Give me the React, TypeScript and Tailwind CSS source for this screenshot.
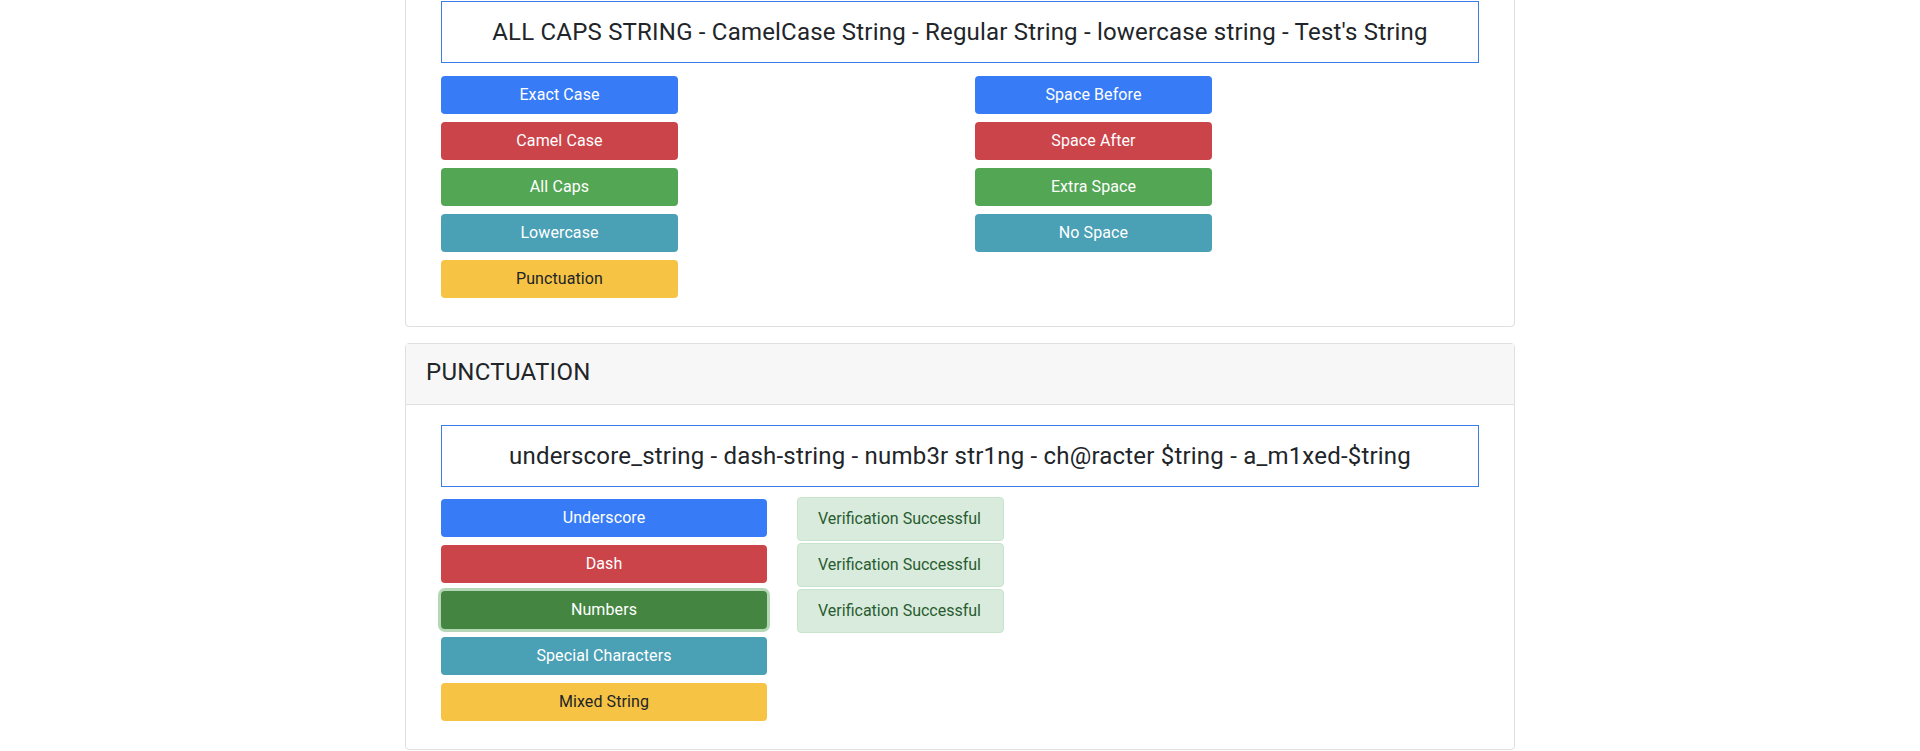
import React from "react";

// Botones de prueba por tarjeta. Test buttons per card.
type Variant = "primary" | "danger" | "success" | "info" | "warning" | "successActive";

const variantClass: Record<Variant, string> = {
  primary: "bg-[#377cf6] text-white",
  danger: "bg-[#cb444a] text-white",
  success: "bg-[#53a653] text-white",
  info: "bg-[#4aa0b5] text-white",
  warning: "bg-[#f6c344] text-[#212529]",
  successActive: "bg-[#438541] text-white ring-[3px] ring-[#b4d8b6]",
};

const TestButton: React.FC<{ label: string; variant: Variant }> = ({ label, variant }) => (
  <button
    className={`h-[38px] w-full rounded-[4px] text-[16px] leading-6 tracking-[0.1px] ${variantClass[variant]}`}
  >
    {label}
  </button>
);

const StringBox: React.FC<{ text: string }> = ({ text }) => (
  <div className="flex h-[62px] items-center justify-center border border-[#3a7be6] text-[24px] leading-9 tracking-[0.2px]">
    {text}
  </div>
);

const SuccessAlert: React.FC = () => (
  <div className="flex h-[44px] items-center whitespace-nowrap rounded-[4px] border border-[#c8e4cc] bg-[#d9ebdc] px-[20px] text-[16px] text-[#285c31]">
    Verification Successful
  </div>
);

const caseButtons: { label: string; variant: Variant }[] = [
  { label: "Exact Case", variant: "primary" },
  { label: "Camel Case", variant: "danger" },
  { label: "All Caps", variant: "success" },
  { label: "Lowercase", variant: "info" },
  { label: "Punctuation", variant: "warning" },
];

const spaceButtons: { label: string; variant: Variant }[] = [
  { label: "Space Before", variant: "primary" },
  { label: "Space After", variant: "danger" },
  { label: "Extra Space", variant: "success" },
  { label: "No Space", variant: "info" },
];

const punctButtons: { label: string; variant: Variant }[] = [
  { label: "Underscore", variant: "primary" },
  { label: "Dash", variant: "danger" },
  { label: "Numbers", variant: "successActive" },
  { label: "Special Characters", variant: "info" },
  { label: "Mixed String", variant: "warning" },
];

export default function App() {
  return (
    <div className="min-h-screen overflow-hidden bg-white font-['Roboto','Liberation_Sans',sans-serif] text-[#212529]">
      <div className="mx-auto -mt-[20px] w-[1110px]">
        {/* Tarjeta de mayúsculas y espacios */}
        <section className="rounded-[4px] border border-[#dfdfdf] p-[20px]">
          <div className="px-[15px] pb-[8px]">
            <StringBox text="ALL CAPS STRING - CamelCase String - Regular String - lowercase string - Test's String" />
            <div className="mt-[13px] grid grid-cols-2 gap-[30px]">
              <div className="flex w-[237px] flex-col gap-2">
                {caseButtons.map((b) => (
                  <TestButton key={b.label} {...b} />
                ))}
              </div>
              <div className="flex w-[237px] flex-col gap-2">
                {spaceButtons.map((b) => (
                  <TestButton key={b.label} {...b} />
                ))}
              </div>
            </div>
          </div>
        </section>

        {/* Tarjeta de puntuación */}
        <section className="mt-[16px] rounded-[4px] border border-[#dfdfdf]">
          <header className="border-b border-[#dfdfdf] bg-[#f7f7f7] px-[20px] pt-[10px] pb-[14px] text-[24px] leading-9 tracking-[0.3px]">
            PUNCTUATION
          </header>
          <div className="p-[20px]">
            <div className="px-[15px] pb-[8px]">
              <StringBox text="underscore_string - dash-string - numb3r str1ng - ch@racter $tring - a_m1xed-$tring" />
              <div className="flex gap-[30px]">
                <div className="mt-[12px] flex w-[326px] flex-col gap-2">
                  {punctButtons.map((b) => (
                    <TestButton key={b.label} {...b} />
                  ))}
                </div>
                <div className="mt-[10px] flex w-[207px] flex-col gap-[2px]">
                  <SuccessAlert />
                  <SuccessAlert />
                  <SuccessAlert />
                </div>
              </div>
            </div>
          </div>
        </section>
      </div>
    </div>
  );
}
